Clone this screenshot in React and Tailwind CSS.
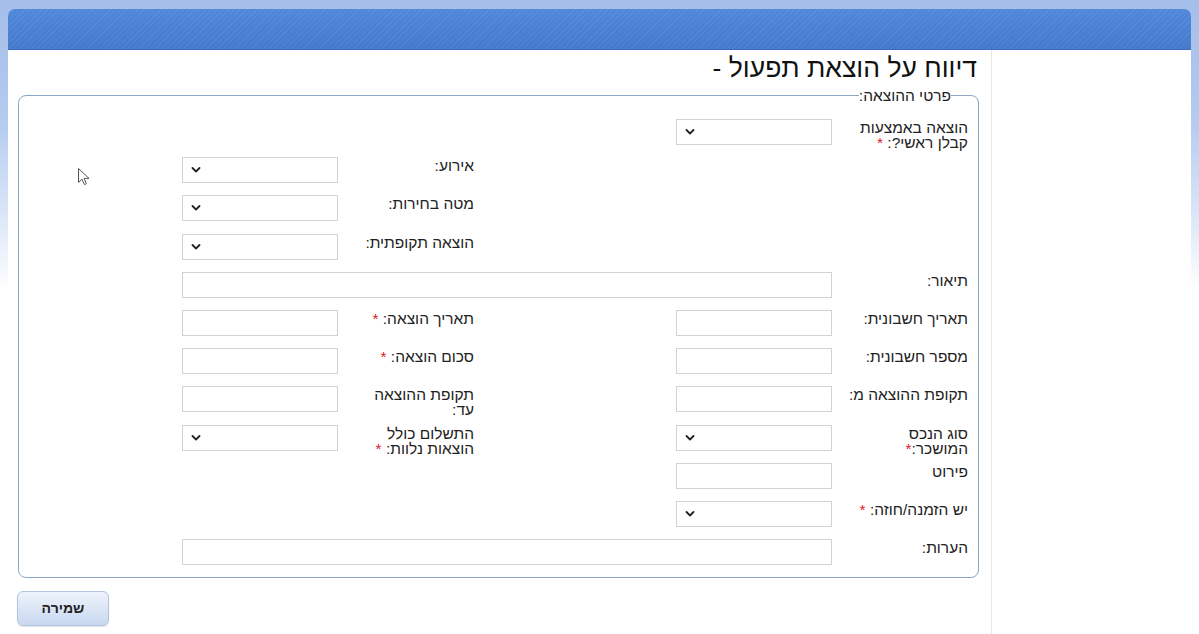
const Chevron = () => (
    <svg viewBox="0 0 10 6" className="h-[6px] w-[10px]" fill="none" stroke="#222" strokeWidth="1.8" strokeLinecap="round" strokeLinejoin="round">
        <path d="M1.5 1l3.5 3.5L8.5 1" />
    </svg>
)

const Req = () => <span className="text-[#e02020]">*</span>

function Control({ select, wide }) {
    return (
        <div className={`flex h-[26px] shrink-0 items-center border border-[#d2d2d2] bg-white ${wide ? "w-[650px]" : "w-[156px]"}`}>
            {select && (
                <span className="mr-auto ml-[8px] flex items-center">
                    <Chevron />
                </span>
            )}
        </div>
    )
}

const labelCls = "w-[124px] shrink-0 pt-[1px] text-[15.5px] leading-[15px] text-[#222]"

function Cell({ label, select }) {
    return (
        <div className="flex w-[292px] shrink-0 items-start gap-[12px]">
            <div className={labelCls}>{label}</div>
            <Control select={select} />
        </div>
    )
}

const Empty = () => <div className="w-[292px] shrink-0" />

function Row({ right, left }) {
    return (
        <div className="flex h-[26px] items-start gap-[202px]">
            {right || <Empty />}
            {left || <Empty />}
        </div>
    )
}

function WideRow({ label }) {
    return (
        <div className="flex h-[26px] items-start gap-[12px]">
            <div className={labelCls}>{label}</div>
            <Control wide />
        </div>
    )
}

export default function App() {
    return (
        <div className="relative min-h-[634px] bg-[linear-gradient(to_bottom,#a3bee9_0px,#b4cbef_120px,#dde8f8_220px,#ffffff_290px)] px-[8px] pt-[9px]" style={{ fontFamily: '"Liberation Sans", Arial, "DejaVu Sans", sans-serif' }}>
            <div className="h-[41px] rounded-t-[7px] border-b border-[#3a6cbf] bg-[image:repeating-linear-gradient(135deg,rgba(255,255,255,0.06)_0px,rgba(255,255,255,0.06)_1px,transparent_1px,transparent_4px),linear-gradient(to_bottom,#5088da,#4579cc)]" />

            <div className="flex min-h-[584px] bg-white">
                <div dir="rtl" className="w-[984px] shrink-0 border-r border-[#e6e6e6]">
                    <h1 className="pt-[3px] pr-[14px] text-[26.5px] leading-[30px] text-[#111]">דיווח על הוצאת תפעול -</h1>

                    <fieldset className="mr-[12px] ml-[10px] mt-[5px] rounded-[8px] border border-[#8ba6c4] pr-[10px] pb-[12px] pt-[16px]">
                        <legend className="mr-[17px] px-0 text-[15.5px] leading-[15px] text-[#222]">פרטי ההוצאה:</legend>

                        <div className="flex flex-col gap-[12.2px]">
                            <Row right={<Cell select label={<>הוצאה באמצעות<br />קבלן ראשי?: <Req /></>} />} />
                            <Row left={<Cell select label="אירוע:" />} />
                            <Row left={<Cell select label="מטה בחירות:" />} />
                            <Row left={<Cell select label="הוצאה תקופתית:" />} />
                            <WideRow label="תיאור:" />
                            <Row
                                right={<Cell label="תאריך חשבונית:" />}
                                left={<Cell label={<>תאריך הוצאה: <Req /></>} />}
                            />
                            <Row
                                right={<Cell label="מספר חשבונית:" />}
                                left={<Cell label={<>סכום הוצאה: <Req /></>} />}
                            />
                            <Row
                                right={<Cell label={<span className="whitespace-nowrap">תקופת ההוצאה מ:</span>} />}
                                left={<Cell label={<>תקופת ההוצאה<br />עד:</>} />}
                            />
                            <Row
                                right={<Cell select label={<>סוג הנכס<br />המושכר:<Req /></>} />}
                                left={<Cell select label={<>התשלום כולל<br />הוצאות נלוות: <Req /></>} />}
                            />
                            <Row right={<Cell label="פירוט" />} />
                            <Row right={<Cell select label={<>יש הזמנה/חוזה: <Req /></>} />} />
                            <WideRow label="הערות:" />
                        </div>
                    </fieldset>

                    <div className="flex justify-end pl-[9px] pt-[13px]">
                        <button className="h-[35px] w-[92px] rounded-[6px] border border-[#b3c5de] bg-[linear-gradient(to_bottom,#eef3fb,#c8d8f0)] text-[14px] font-bold text-[#222] shadow-[0_1px_1px_rgba(0,0,0,0.12)]">
                            שמירה
                        </button>
                    </div>
                </div>
                <div className="flex-1" />
            </div>

            <svg className="absolute left-[78px] top-[168px] h-[18px] w-[12px]" viewBox="0 0 12 18">
                <path d="M0.5 0.5v14l3.5-3.3 2.4 5.4 2-0.9-2.3-5.3h4.9z" fill="#fff" stroke="#555" strokeWidth="1" strokeLinejoin="round" />
            </svg>
        </div>
    )
}
